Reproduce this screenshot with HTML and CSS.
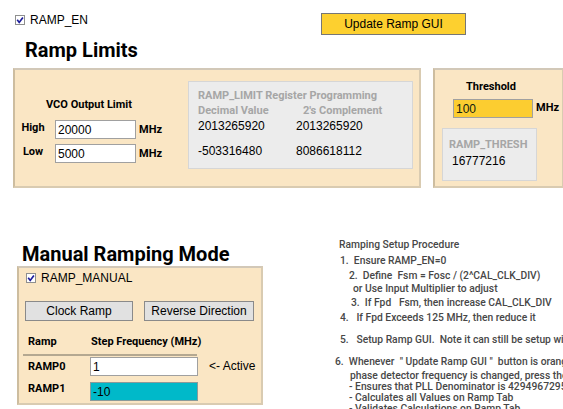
FILE: index.html
```html
<!DOCTYPE html>
<html lang="en">
<head>
    <meta charset="UTF-8">
    <title>Ramp</title>
    <link rel="stylesheet" href="styles.css">
</head>
<body>
    <div class="top">
        <label class="check ramp-en">
            <svg class="cb" width="10" height="10" viewBox="0 0 10 10"><rect x="0.5" y="0.5" width="9" height="9" fill="#fff" stroke="#8e8f8f"/><path d="M2.2 4.8 L4.2 7.4 L7.9 2.4" fill="none" stroke="#1c1c9c" stroke-width="1.7"/></svg>
            RAMP_EN
        </label>
        <button class="update-btn">Update Ramp GUI</button>
    </div>

    <h2 class="section-title limits-title">Ramp Limits</h2>

    <div class="limits-row">
        <div class="panel vco-panel">
            <div class="vco-col">
                <div class="label-b vco-title">VCO Output Limit</div>
                <div class="field-row">
                    <span class="label-b row-label">High</span>
                    <input class="txt vco-input" type="text" value="20000">
                    <span class="label-b unit">MHz</span>
                </div>
                <div class="field-row low-row">
                    <span class="label-b row-label">Low</span>
                    <input class="txt vco-input" type="text" value="5000">
                    <span class="label-b unit">MHz</span>
                </div>
            </div>
            <div class="reg-box limit-box">
                <div class="reg-title">RAMP_LIMIT Register Programming</div>
                <div class="limit-grid">
                    <div class="reg-title">Decimal Value</div>
                    <div class="reg-title comp">2's Complement</div>
                    <div class="val">2013265920</div>
                    <div class="val">2013265920</div>
                    <div class="val second">-503316480</div>
                    <div class="val second">8086618112</div>
                </div>
            </div>
        </div>

        <div class="panel thresh-panel">
            <div class="label-b thresh-title">Threshold</div>
            <div class="field-row thresh-row">
                <input class="txt thresh-input" type="text" value="100">
                <span class="label-b unit">MHz</span>
            </div>
            <div class="reg-box thresh-box">
                <div class="reg-title">RAMP_THRESH</div>
                <div class="val thresh-val">16777216</div>
            </div>
        </div>
    </div>

    <div class="bottom">
        <div class="manual-col">
            <h2 class="section-title manual-title">Manual Ramping Mode</h2>
            <div class="panel manual-panel">
                <label class="check ramp-manual">
                    <svg class="cb" width="10" height="10" viewBox="0 0 10 10"><rect x="0.5" y="0.5" width="9" height="9" fill="#fff" stroke="#8e8f8f"/><path d="M2.2 4.8 L4.2 7.4 L7.9 2.4" fill="none" stroke="#1c1c9c" stroke-width="1.7"/></svg>
                    RAMP_MANUAL
                </label>
                <div class="btn-row">
                    <button class="gray-btn clock-btn">Clock Ramp</button>
                    <button class="gray-btn reverse-btn">Reverse Direction</button>
                </div>
                <div class="ramp-head">
                    <span class="label-b ramp-col">Ramp</span>
                    <span class="label-b">Step Frequency (MHz)</span>
                </div>
                <div class="ramp-row">
                    <span class="label-b ramp-col ramp0">RAMP0</span>
                    <input class="txt step-input" type="text" value="1">
                    <span class="active-note">&lt;- Active</span>
                </div>
                <div class="ramp-row second-ramp">
                    <span class="label-b ramp-col ramp1">RAMP1</span>
                    <input class="txt step-input cyan" type="text" value="-10">
                </div>
            </div>
        </div>

        <div class="procedure">
            <div class="step ind-4">Ramping Setup Procedure</div>
            <div class="step ind-5 mt-5">1.  Ensure RAMP_EN=0</div>
            <div class="step ind-14 mt-4">2.  Define  Fsm = Fosc / (2^CAL_CLK_DIV)</div>
            <div class="step ind-18 mt-2">or Use Input Multiplier to adjust</div>
            <div class="step ind-16 mt-3">3.  If Fpd   Fsm, then increase CAL_CLK_DIV</div>
            <div class="step ind-5 mt-4">4.   If Fpd Exceeds 125 MHz, then reduce it</div>
            <div class="step ind-5 mt-11">5.   Setup Ramp GUI.  Note it can still be setup without RAMP_EN</div>
            <div class="step ind-0 mt-11">6.  Whenever  " Update Ramp GUI "  button is orange, or the</div>
            <div class="step ind-15 mt-3">phase detector frequency is changed, press the button</div>
            <div class="step ind-14">- Ensures that PLL Denominator is 4294967295</div>
            <div class="step ind-14">- Calculates all Values on Ramp Tab</div>
            <div class="step ind-14">- Validates Calculations on Ramp Tab</div>
        </div>
    </div>
</body>
</html>
```

FILE: styles.css
```css
body {
    margin: 0;
    width: 563px;
    height: 409px;
    overflow: hidden;
    font-family: "Liberation Sans", Arial, sans-serif;
    font-size: 12px;
    color: #000;
    background-color: #fff;
}
.top {
    display: flex;
    align-items: flex-start;
    height: 38px;
    padding: 13px 0 0 15px;
    box-sizing: border-box;
}
.check {
    display: flex;
    align-items: center;
    line-height: 16px;
    white-space: nowrap;
}
.cb {
    margin-right: 5px;
    flex: none;
}
.ramp-en {
    width: 306px;
    margin-top: -1px;
}
.update-btn {
    width: 145px;
    height: 22px;
    padding: 0;
    background-color: #fdd02f;
    border: 1px solid #767676;
    font-family: "Liberation Sans", Arial, sans-serif;
    font-size: 12px;
    color: #000;
}
.section-title {
    margin: 0;
    font-family: Roboto, sans-serif;
    font-weight: 700;
    font-size: 20px;
    line-height: 24px;
    color: #000;
}
.limits-title {
    padding-left: 25px;
}
.label-b {
    font-family: Roboto, sans-serif;
    font-weight: 700;
    font-size: 11px;
    line-height: 13px;
    white-space: nowrap;
}
.panel {
    background-color: #fae6c4;
    border: 2px solid #d9cbb1;
    border-top-color: #d2c8b8;
    border-left-color: #cdbd9f;
    box-sizing: border-box;
}
.limits-row {
    display: flex;
    margin-top: 6px;
}
.vco-panel {
    display: flex;
    align-items: flex-start;
    flex: none;
    width: 408px;
    height: 120px;
    margin-left: 13px;
}
.vco-col {
    width: 173px;
    padding-top: 28px;
}
.vco-title {
    padding-left: 31px;
}
.field-row {
    display: flex;
    align-items: flex-start;
    margin-top: 9px;
}
.low-row {
    margin-top: 5px;
}
.row-label {
    width: 36px;
    text-align: center;
    padding-top: 1px;
}
.unit {
    margin-left: 3px;
    padding-top: 3px;
}
.txt {
    box-sizing: border-box;
    height: 19px;
    margin: 0;
    padding: 0 2px;
    border: 1px solid #a0a0a0;
    background-color: #fff;
    font-family: "Liberation Sans", Arial, sans-serif;
    font-size: 12px;
    color: #000;
}
.vco-input {
    width: 81px;
    margin-left: 4px;
}
.reg-box {
    background-color: #ececec;
    border: 1px solid #d6d6d6;
    box-sizing: border-box;
}
.limit-box {
    width: 225px;
    height: 88px;
    margin-top: 11px;
    padding: 7px 0 0 9px;
}
.reg-title {
    font-family: Roboto, sans-serif;
    font-weight: 700;
    font-size: 11px;
    line-height: 13px;
    color: #a6a6a6;
    white-space: nowrap;
}
.limit-grid {
    display: grid;
    grid-template-columns: 98px 1fr;
    margin-top: 2px;
}
.comp {
    padding-left: 7px;
}
.val {
    line-height: 14px;
    margin-top: 2px;
}
.val.second {
    margin-top: 11px;
}
.thresh-panel {
    flex: none;
    width: 131px;
    height: 120px;
    margin-left: 12px;
    padding-top: 10px;
}
.thresh-title {
    padding-left: 31px;
}
.thresh-row {
    margin-top: 6px;
    padding-left: 18px;
}
.thresh-row .unit {
    padding-top: 2px;
}
.thresh-input {
    width: 80px;
    background-color: #fccd30;
    color: #102010;
}
.thresh-box {
    width: 95px;
    height: 53px;
    margin: 10px 0 0 7px;
    padding: 9px 0 0 6px;
}
.thresh-val {
    padding-left: 3px;
    margin-top: 3px;
}
.bottom {
    display: flex;
    align-items: flex-start;
}
.manual-col {
    flex: none;
    width: 246px;
    margin: 54px 0 0 17px;
}
.manual-title {
    padding-left: 5px;
}
.manual-panel {
    height: 139px;
    padding: 2px 0 0 6px;
}
.ramp-manual {
    margin-left: 1px;
}
.btn-row {
    display: flex;
    margin-top: 15px;
}
.gray-btn {
    height: 20px;
    padding: 0;
    background-color: #e1e1e1;
    border: 1px solid #8a8a8a;
    font-family: "Liberation Sans", Arial, sans-serif;
    font-size: 12px;
    color: #000;
}
.clock-btn {
    width: 108px;
}
.reverse-btn {
    width: 110px;
    margin-left: 11px;
}
.ramp-head {
    display: flex;
    width: 174px;
    margin: 14px 0 0 -2px;
    padding-bottom: 6px;
    border-bottom: 2px solid #b4a891;
}
.ramp-col {
    flex: none;
    width: 62px;
    padding-left: 5px;
}
.ramp-head .ramp-col + .label-b {
    padding-left: 1px;
}
.ramp-row {
    display: flex;
    align-items: flex-start;
    margin: 1px 0 0 -2px;
}
.second-ramp {
    margin-top: 6px;
}
.ramp0 {
    padding-top: 3px;
}
.step-input {
    flex: none;
    width: 108px;
}
.step-input.cyan {
    background-color: #00b9c9;
    border-color: #8a9a9a;
}
.active-note {
    margin-left: 11px;
    line-height: 14px;
    padding-top: 2px;
    white-space: nowrap;
}
.procedure {
    flex: none;
    margin: 51px 0 0 72px;
    font-family: Roboto, sans-serif;
    font-weight: 500;
    font-size: 10.3px;
    line-height: 11px;
    color: #474747;
}
.step {
    white-space: pre;
}
.ind-0 { padding-left: 0; }
.ind-4 { padding-left: 4px; }
.ind-5 { padding-left: 5px; }
.ind-14 { padding-left: 14px; }
.ind-15 { padding-left: 15px; }
.ind-16 { padding-left: 16px; }
.ind-18 { padding-left: 18px; }
.mt-1 { margin-top: 1px; }
.mt-2 { margin-top: 2px; }
.mt-3 { margin-top: 3px; }
.mt-4 { margin-top: 4px; }
.mt-5 { margin-top: 5px; }
.mt-10 { margin-top: 10px; }
.mt-11 { margin-top: 11px; }
```
